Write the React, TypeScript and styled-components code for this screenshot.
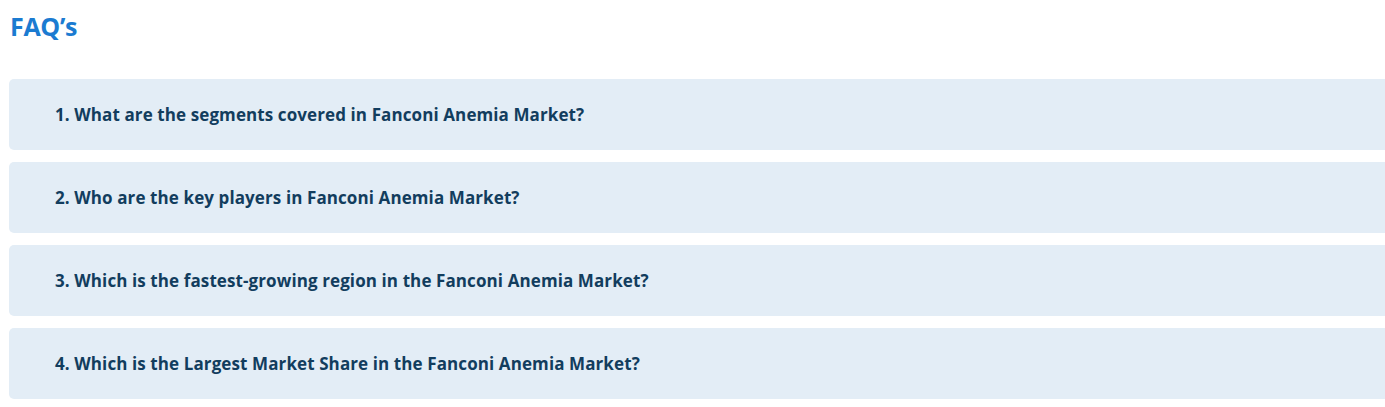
import styled, { createGlobalStyle } from "styled-components";

const GlobalStyle = createGlobalStyle`
  html, body {
    margin: 0;
    padding: 0;
    background: #fff;
  }
  body {
    font-family: "Open Sans", "Noto Sans", sans-serif;
    overflow: hidden;
  }
`;

const ScSection = styled.section`
  width: 1400px;
  padding: 10px 0 0 10px;
`;

const ScTitle = styled.h2`
  margin: 0 0 37px;
  font-size: 25px;
  line-height: 32px;
  font-weight: 700;
  letter-spacing: -0.3px;
  color: #1b7bd1;
`;

const ScList = styled.div`
  display: flex;
  flex-direction: column;
  gap: 12px;
  margin-left: -1px;
`;

const ScItem = styled.div`
  display: flex;
  align-items: center;
  height: 71px;
  padding-left: 46px;
  background: #e3edf6;
  border-radius: 5px 0 0 5px;
  font-size: 17px;
  font-weight: 700;
  letter-spacing: 0.1px;
  color: #123d5e;
`;

const QUESTIONS = [
  "1. What are the segments covered in Fanconi Anemia Market?",
  "2. Who are the key players in Fanconi Anemia Market?",
  "3. Which is the fastest-growing region in the Fanconi Anemia Market?",
  "4. Which is the Largest Market Share in the Fanconi Anemia Market?"
];

function App(): React.ReactElement {
  return <>
    <GlobalStyle />
    <ScSection>
      <ScTitle>FAQ’s</ScTitle>
      <ScList>
        {QUESTIONS.map(q => <ScItem key={q}>{q}</ScItem>)}
      </ScList>
    </ScSection>
  </>;
}

export default App;
